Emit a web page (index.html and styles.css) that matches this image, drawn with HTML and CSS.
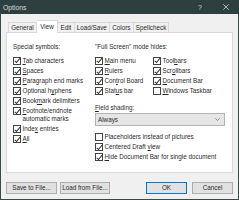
FILE: index.html
```html
<!DOCTYPE html>
<html>
<head>
<meta charset="utf-8">
<link rel="stylesheet" href="styles.css">
</head>
<body>
<div class="window">
  <div class="titlebar">
    <span class="title">Options</span>
    <span class="help">?</span>
    <span class="close"><svg width="6" height="6" viewBox="0 0 6 6"><path d="M0.3 0.3L5.7 5.7M5.7 0.3L0.3 5.7" stroke="#d4d8d8" stroke-width="0.8"/></svg></span>
  </div>
  <div class="tabs">
    <div class="tab">General</div>
    <div class="tab active">View</div>
    <div class="tab">Edit</div>
    <div class="tab">Load/Save</div>
    <div class="tab">Colors</div>
    <div class="tab">Spellcheck</div>
  </div>
  <div class="panel">
    <div class="col1">
      <div class="head">Special symbols:</div>
      <div class="list">
        <div class="row"><span class="cb on"></span><span class="lbl"><u>T</u>ab characters</span></div>
        <div class="row"><span class="cb on"></span><span class="lbl"><u>S</u>paces</span></div>
        <div class="row"><span class="cb on"></span><span class="lbl"><u>P</u>aragraph end marks</span></div>
        <div class="row"><span class="cb on"></span><span class="lbl">Optional h<u>y</u>phens</span></div>
        <div class="row"><span class="cb on"></span><span class="lbl">Book<u>m</u>ark delimiters</span></div>
        <div class="row"><span class="cb on"></span><span class="lbl"><u>F</u>ootnote/endnote<br>automatic marks</span></div>
        <div class="row"><span class="cb on"></span><span class="lbl">Inde<u>x</u> entries</span></div>
        <div class="row"><span class="cb on"></span><span class="lbl"><u>A</u>ll</span></div>
      </div>
    </div>
    <div class="col2">
      <div class="head">"Full Screen" mode hides:</div>
      <div class="sub">
        <div class="list subcol">
          <div class="row"><span class="cb on"></span><span class="lbl"><u>M</u>ain menu</span></div>
          <div class="row"><span class="cb on"></span><span class="lbl"><u>R</u>ulers</span></div>
          <div class="row"><span class="cb on"></span><span class="lbl">Con<u>t</u>rol Board</span></div>
          <div class="row"><span class="cb on"></span><span class="lbl">Stat<u>u</u>s bar</span></div>
        </div>
        <div class="list">
          <div class="row"><span class="cb on"></span><span class="lbl">Tool<u>b</u>ars</span></div>
          <div class="row"><span class="cb on"></span><span class="lbl">Scr<u>o</u>llbars</span></div>
          <div class="row"><span class="cb on"></span><span class="lbl"><u>D</u>ocument Bar</span></div>
          <div class="row"><span class="cb"></span><span class="lbl"><u>W</u>indows Taskbar</span></div>
        </div>
      </div>
      <div class="head field"><u>F</u>ield shading:</div>
      <div class="select"><span>Always</span><svg class="chev" width="5" height="3" viewBox="0 0 5 3"><path d="M0.3 0.3L2.5 2.5L4.7 0.3" fill="none" stroke="#707070" stroke-width="0.7"/></svg></div>
      <div class="list lower">
        <div class="row"><span class="cb"></span><span class="lbl">Placeholders instead of pictures</span></div>
        <div class="row"><span class="cb on"></span><span class="lbl">Centered Draft <u>v</u>iew</span></div>
        <div class="row"><span class="cb on"></span><span class="lbl"><u>H</u>ide Document Bar for single document</span></div>
      </div>
    </div>
  </div>
  <div class="buttons">
    <div class="btn save">Save to File...</div>
    <div class="btn load">Load from File...</div>
    <div class="btn ok">OK</div>
    <div class="btn cancel">Cancel</div>
  </div>
</div>
</body>
</html>
```
FILE: styles.css
```css
* { box-sizing: border-box; }
html, body { margin: 0; padding: 0; }
body {
  font-family: "Liberation Sans", Arial, sans-serif;
  font-size: 6.3px;
  color: #2b2b2b;
  background: #f0f0f0;
}
.window {
  width: 239px;
  height: 200px;
  display: flex;
  flex-direction: column;
  background: #f0f0f0;
  border: 1px solid #3a4848;
  border-top: 0;
}
.titlebar {
  height: 14px;
  flex: 0 0 14px;
  background: #2e3f3f;
  display: flex;
  align-items: center;
  padding-left: 2px;
  margin: 0 -1px;
  padding-right: 0;
}
.title {
  color: #d8dcdc;
  font-size: 6.8px;
  padding-left: 1px;
}
.help {
  margin-left: auto;
  width: 26px;
  text-align: center;
  color: #d4d8d8;
  font-size: 7px;
}
.close {
  width: 26px;
  display: flex;
  justify-content: center;
  align-items: center;
}
.tabs {
  display: flex;
  align-items: flex-end;
  height: 12px;
  margin-top: 6px;
  padding-left: 7px;
}
.tab {
  height: 10px;
  line-height: 9px;
  padding: 0 2.2px;
  border: 1px solid #d9d9d9;
  border-bottom: 0;
  border-left: 0;
  background: #f0f0f0;
  white-space: nowrap;
}
.tab:first-child { border-left: 1px solid #d9d9d9; }
.tab.active {
  height: 13px;
  margin-bottom: -1px;
  background: #fff;
  line-height: 12px;
  position: relative;
  z-index: 1;
  padding: 0 3.5px;
}
.panel {
  height: 141px;
  flex: 0 0 141px;
  margin: 0 5px;
  background: #fff;
  border: 1px solid #d9d9d9;
  padding: 10px 0 0 6px;
  display: flex;
}
.col1 { width: 82px; }
.col2 { flex: 1; }
.head {
  line-height: 8px;
  height: 8px;
  margin-bottom: 5.5px;
  white-space: nowrap;
}
.list {
  display: flex;
  flex-direction: column;
  gap: 2.15px;
}
.row {
  display: flex;
  align-items: flex-start;
  white-space: nowrap;
}
.lbl { line-height: 8px; }
.cb {
  width: 8px;
  height: 8px;
  flex: 0 0 8px;
  border: 1px solid #444;
  background: #fff;
  margin-right: 1.5px;
  position: relative;
}
.cb.on::after {
  content: "";
  position: absolute;
  left: 1.7px;
  top: -0.1px;
  width: 2.4px;
  height: 4.6px;
  border-right: 0.8px solid #333;
  border-bottom: 0.8px solid #333;
  transform: rotate(40deg);
}
.sub { display: flex; }
.subcol { width: 58px; }
.field { margin-top: 8.75px; margin-bottom: 1.6px; }
.select {
  width: 130px;
  height: 12.4px;
  background: #e6e6e6;
  border: 1px solid #b4b4b4;
  display: flex;
  align-items: center;
  padding: 0 4px 0 2px;
}
.chev { margin-left: auto; }
.lower { margin-top: 7px; gap: 2px; }
.buttons {
  display: flex;
  margin-top: 9px;
  padding: 0 5px;
}
.btn {
  height: 12px;
  line-height: 10px;
  text-align: center;
  background: #e1e1e1;
  border: 1px solid #adadad;
  white-space: nowrap;
}
.save { width: 51px; }
.load { width: 50px; margin-left: 3px; }
.ok { width: 41px; margin-left: auto; border-color: #0078d7; }
.cancel { width: 41px; margin-left: 5px; }
```
